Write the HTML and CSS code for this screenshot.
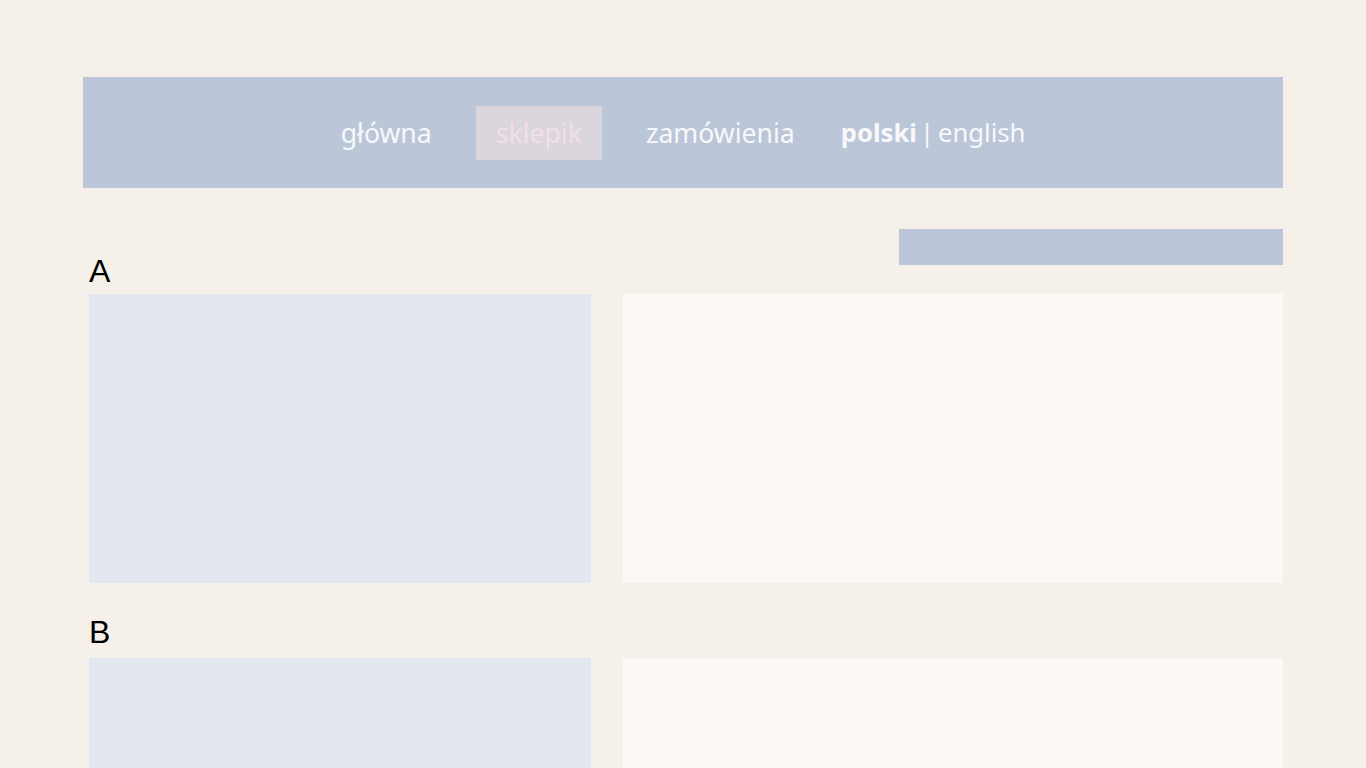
FILE: index.html
```html
<!DOCTYPE html>
<html lang="pl">
<head>
<meta charset="utf-8">
<title>sklepik</title>
<link rel="stylesheet" href="styles.css">
</head>
<body>
<div class="page">
  <header class="topbar">
    <nav class="nav">
      <a class="nav-link" href="#">główna</a>
      <a class="nav-link active" href="#">sklepik</a>
      <a class="nav-link" href="#">zamówienia</a>
      <span class="nav-lang"><b>polski</b><span class="sep">|</span>english</span>
    </nav>
  </header>
  <div class="toolbar"><div class="search"></div></div>
  <main class="sections">
    <section class="section">
      <h2 class="section-label">A</h2>
      <div class="row">
        <div class="pane-left"></div>
        <div class="pane-right"></div>
      </div>
    </section>
    <section class="section">
      <h2 class="section-label">B</h2>
      <div class="row">
        <div class="pane-left"></div>
        <div class="pane-right"></div>
      </div>
    </section>
  </main>
</div>
</body>
</html>
```

FILE: styles.css
```css
html, body {
  margin: 0;
  padding: 0;
  background: #f5f0ea;
}
body {
  font-family: "Liberation Sans", Arial, sans-serif;
  overflow: hidden;
  height: 768px;
}
.page {
  padding: 77px 83px 0 83px;
}
.topbar {
  background: #bbc7d8;
  height: 111px;
  display: flex;
  align-items: center;
  justify-content: center;
}
.nav {
  display: flex;
  align-items: center;
  gap: 25px;
  font-family: "Noto Sans", "Open Sans", sans-serif;
  font-size: 26.6px;
  color: #f8f8fb;
}
.nav-link {
  display: block;
  height: 54px;
  line-height: 54px;
  padding: 0 19px;
  color: #f8f8fb;
  text-decoration: none;
}
.nav-link.active {
  background: #dbd5dd;
  color: #f2dfe4;
  padding: 0 20px;
}
.nav-lang {
  display: flex;
  align-items: center;
  line-height: 54px;
  padding: 0 19px;
  margin-left: -17px;
  font-size: 25.6px;
}
.nav-lang b {
  font-weight: 700;
}
.sep {
  margin: 0 4px 0 3px;
}
.toolbar {
  margin-top: 41px;
  display: flex;
  justify-content: flex-end;
}
.search {
  width: 384px;
  height: 36px;
  background: #bbc7d8;
}
.sections {
  margin-top: -10px;
  padding-left: 6px;
  display: flex;
  flex-direction: column;
  gap: 33px;
}
.section-label {
  margin: 0 0 7px 0;
  font-size: 32px;
  line-height: 32px;
  font-weight: 400;
  color: #000;
}
.section + .section .section-label {
  margin-bottom: 10px;
}
.row {
  display: grid;
  grid-template-columns: 502px 660px;
  gap: 32px;
}
.pane-left {
  height: 289px;
  background: #e3e8f0;
}
.pane-right {
  height: 289px;
  background: #fcf9f5;
}
```
